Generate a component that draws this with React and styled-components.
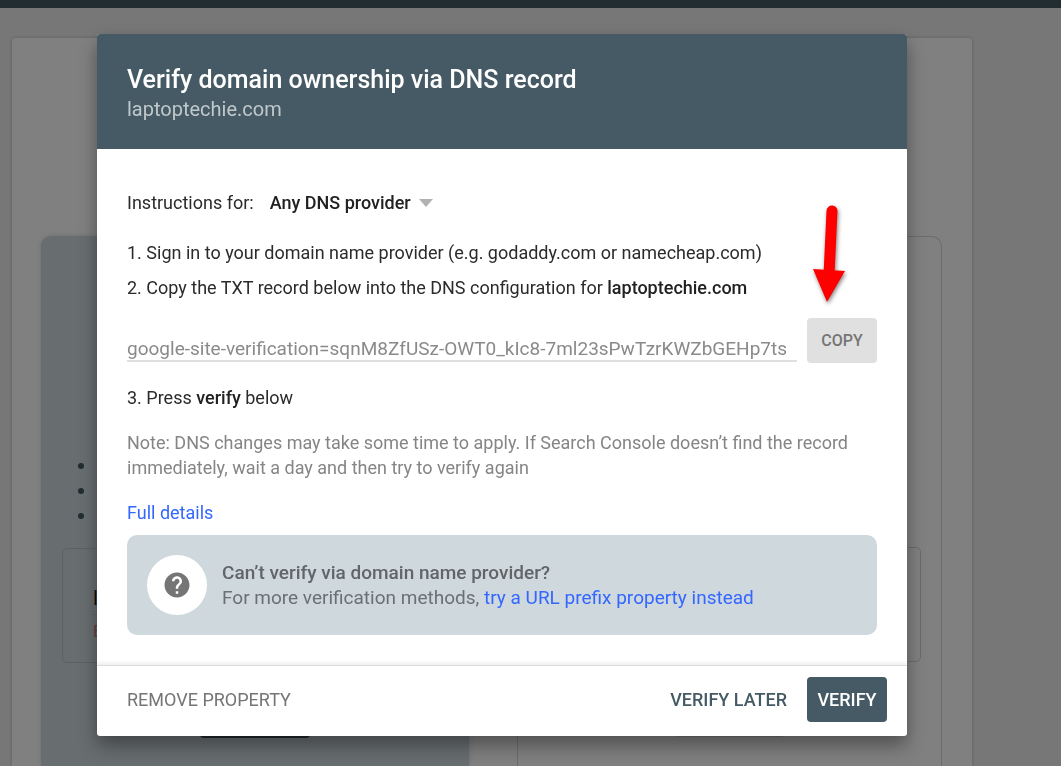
import React from "react";
import styled, { createGlobalStyle } from "styled-components";

export default function App() {
  return (
    <>
      <GlobalStyle />
      <Page>
        <TopBar />
        <WelcomeCard>
          <DomainPanel>
            <BulletList>
              <li />
              <li />
              <li />
            </BulletList>
            <FieldBox>
              <PropertyInput aria-label="Domain" defaultValue="laptoptechie.com" />
              <Hint>Enter domain</Hint>
            </FieldBox>
            <ContinueButton aria-label="Continue" $dark />
          </DomainPanel>
          <PrefixPanel>
            <FieldBox $light />
            <ContinueButton aria-label="Continue" />
          </PrefixPanel>
        </WelcomeCard>
      </Page>
      <Overlay>
        <Dialog role="dialog" aria-labelledby="dialog-title">
          <Header>
            <Title id="dialog-title">Verify domain ownership via DNS record</Title>
            <Domain>laptoptechie.com</Domain>
          </Header>
          <Body>
            <ProviderRow>
              <label htmlFor="provider">Instructions for:</label>
              <SelectBox>
                <ProviderSelect id="provider">
                  <option>Any DNS provider</option>
                </ProviderSelect>
                <Caret viewBox="0 0 14 8">
                  <path d="M0 0h14L7 8z" />
                </Caret>
              </SelectBox>
            </ProviderRow>
            <Step>1. Sign in to your domain name provider (e.g. godaddy.com or namecheap.com)</Step>
            <Step>
              2. Copy the TXT record below into the DNS configuration for <b>laptoptechie.com</b>
            </Step>
            <RecordRow>
              <RecordInput
                aria-label="TXT record"
                readOnly
                value="google-site-verification=sqnM8ZfUSz-OWT0_kIc8-7ml23sPwTzrKWZbGEHp7ts"
              />
              <CopyCell>
                <CopyButton>COPY</CopyButton>
                <Arrow viewBox="0 0 44 108">
                  <path
                    d="M21 12L18 76"
                    stroke="#f00"
                    strokeWidth="11"
                    strokeLinecap="round"
                  />
                  <path d="M2 70L34 72L16 103z" fill="#f00" />
                </Arrow>
              </CopyCell>
            </RecordRow>
            <Step>
              3. Press <b>verify</b> below
            </Step>
            <Note>
              Note: DNS changes may take some time to apply. If Search Console doesn’t find the
              record immediately, wait a day and then try to verify again
            </Note>
            <Link href="#details">Full details</Link>
            <HelpBox>
              <HelpCircle>
                <HelpIcon viewBox="0 0 24 24">
                  <path d="M12 2C6.48 2 2 6.48 2 12s4.48 10 10 10 10-4.48 10-10S17.52 2 12 2zm1 17h-2v-2h2v2zm2.07-7.75l-.9.92C13.45 12.9 13 13.5 13 15h-2v-.5c0-1.1.45-2.1 1.17-2.83l1.24-1.26c.37-.36.59-.86.59-1.41 0-1.1-.9-2-2-2s-2 .9-2 2H8c0-2.21 1.79-4 4-4s4 1.79 4 4c0 .88-.36 1.68-.93 2.25z" />
                </HelpIcon>
              </HelpCircle>
              <div>
                <HelpTitle>Can’t verify via domain name provider?</HelpTitle>
                <HelpText>
                  For more verification methods,{" "}
                  <Link href="#prefix">try a URL prefix property instead</Link>
                </HelpText>
              </div>
            </HelpBox>
          </Body>
          <Footer>
            <RemoveButton>REMOVE PROPERTY</RemoveButton>
            <LaterButton>VERIFY LATER</LaterButton>
            <VerifyButton>VERIFY</VerifyButton>
          </Footer>
        </Dialog>
      </Overlay>
    </>
  );
}

const GlobalStyle = createGlobalStyle`
  * {
    box-sizing: border-box;
  }
  body {
    margin: 0;
    background: #777777;
    font-family: Roboto, "Liberation Sans", sans-serif;
    font-size: 18px;
    line-height: 25px;
    color: #2b2b2b;
  }
  b {
    font-weight: 500;
    color: #212121;
  }
  button, input, select {
    border: 0;
    padding: 0;
    font: inherit;
    background: none;
  }
`;

const Page = styled.div`
  display: flex;
  flex-direction: column;
  height: 100vh;
  overflow: hidden;
`;

const TopBar = styled.div`
  flex: none;
  height: 8px;
  background: #222d32;
`;

const WelcomeCard = styled.div`
  flex: 1;
  display: grid;
  grid-template-columns: 428fr 425fr;
  gap: 48px;
  margin: 30px 89px 0 12px;
  padding: 198px 30px 0 29px;
  background: #808080;
  border-radius: 3px 3px 0 0;
  box-shadow: 0 0 3px #5c5c5c;
`;

const Panel = styled.div`
  display: flex;
  flex-direction: column;
  padding: 216px 21px 0;
  border-radius: 10px 10px 0 0;
`;

const DomainPanel = styled(Panel)`
  background: #686d70;
  box-shadow: 0 0 4px #686d70;
`;

const PrefixPanel = styled(Panel)`
  padding: 310px 20px 0;
  border: 1px solid #6c6c6c;
  border-bottom: 0;
`;

const BulletList = styled.ul`
  margin: 0 0 21px;
  padding-left: 34px;
  color: #222d32;

  li {
    height: 25px;
  }
`;

const FieldBox = styled.div`
  flex: none;
  height: 115px;
  padding: 32px 30px 0;
  border: 1px solid ${(props) => (props.$light ? "#6c6c6c" : "#5c6163")};
  border-radius: 5px;
`;

const PropertyInput = styled.input`
  display: block;
  width: 100%;
  height: 34px;
  border-bottom: 1px solid #5c6163;
  font-size: 20px;
  color: #111111;
`;

const Hint = styled.div`
  margin-top: 4px;
  font-size: 16px;
  color: #66403a;
`;

const ContinueButton = styled.button`
  align-self: center;
  flex: none;
  width: 110px;
  height: 45px;
  margin-top: 30px;
  border-radius: 4px;
  background: ${(props) => (props.$dark ? "#20282c" : "#707070")};
`;

const Overlay = styled.div`
  position: fixed;
  inset: 0;
  display: flex;
  align-items: flex-start;
  padding: 34px 154px 30px 97px;
`;

const Dialog = styled.div`
  flex: 1;
  background: #ffffff;
  border-radius: 3px;
  box-shadow: 0 11px 19px rgba(0, 0, 0, 0.3), 0 4px 16px rgba(0, 0, 0, 0.1);
`;

const Header = styled.div`
  padding: 32px 30px 25px;
  background: #455a64;
  border-radius: 3px 3px 0 0;
`;

const Title = styled.h1`
  margin: 0;
  font-size: 25px;
  font-weight: 500;
  line-height: 28px;
  color: #ffffff;
`;

const Domain = styled.div`
  font-size: 20px;
  line-height: 30px;
  color: #c1c8cb;
`;

const Body = styled.div`
  padding: 41px 30px 30px;
`;

const ProviderRow = styled.div`
  display: flex;
  align-items: center;
  gap: 16px;
  margin-bottom: 25px;
`;

const SelectBox = styled.div`
  display: flex;
  align-items: center;
`;

const ProviderSelect = styled.select`
  appearance: none;
  height: 25px;
  padding-right: 22px;
  font-weight: 500;
  color: #212121;
`;

const Caret = styled.svg`
  width: 14px;
  height: 8px;
  margin-left: -14px;
  fill: #b2b2b2;
  pointer-events: none;
`;

const Step = styled.p`
  margin: 0 0 10px;
`;

const RecordRow = styled.div`
  display: flex;
  align-items: flex-end;
  gap: 10px;
  margin: 18px 0 22px;
`;

const RecordInput = styled.input`
  flex: 1;
  min-width: 0;
  height: 30px;
  margin-bottom: 1px;
  padding-top: 4px;
  border-bottom: 2px solid #e0e0e0;
  font-size: 19px;
  color: #8a8a8a;
`;

const CopyCell = styled.div`
  position: relative;
`;

const CopyButton = styled.button`
  width: 70px;
  height: 45px;
  border-radius: 4px;
  background: #e0e0e0;
  font-size: 16px;
  font-weight: 500;
  color: #757575;
`;

const Arrow = styled.svg`
  position: absolute;
  left: 4px;
  bottom: 56px;
  width: 44px;
  height: 108px;
  filter: drop-shadow(1px 2px 2px rgba(0, 0, 0, 0.5));
  pointer-events: none;
`;

const Note = styled.p`
  margin: 20px 0;
  color: #858585;
`;

const Link = styled.a`
  color: #3367ff;
  text-decoration: none;
`;

const HelpBox = styled.div`
  display: flex;
  align-items: center;
  gap: 15px;
  margin-top: 10px;
  padding: 20px;
  border-radius: 10px;
  background: #cfd8dd;
`;

const HelpCircle = styled.div`
  display: flex;
  align-items: center;
  justify-content: center;
  width: 60px;
  height: 60px;
  border-radius: 50%;
  background: #ffffff;
`;

const HelpIcon = styled.svg`
  width: 30px;
  height: 30px;
  fill: #757575;
`;

const HelpTitle = styled.div`
  font-size: 19px;
  font-weight: 500;
  color: #616568;
`;

const HelpText = styled.div`
  font-size: 19px;
  color: #6b7073;
`;

const Footer = styled.div`
  display: flex;
  align-items: center;
  padding: 11px 20px 14px 30px;
  border-top: 1px solid #d9dddd;
  box-shadow: 0 -2px 4px rgba(0, 0, 0, 0.08);
`;

const RemoveButton = styled.button`
  margin-right: auto;
  color: #757575;
`;

const LaterButton = styled.button`
  margin-right: 20px;
  color: #455a64;
  font-weight: 500;
`;

const VerifyButton = styled.button`
  width: 80px;
  height: 45px;
  border-radius: 4px;
  background: #455a64;
  font-weight: 500;
  color: #ffffff;
`;
